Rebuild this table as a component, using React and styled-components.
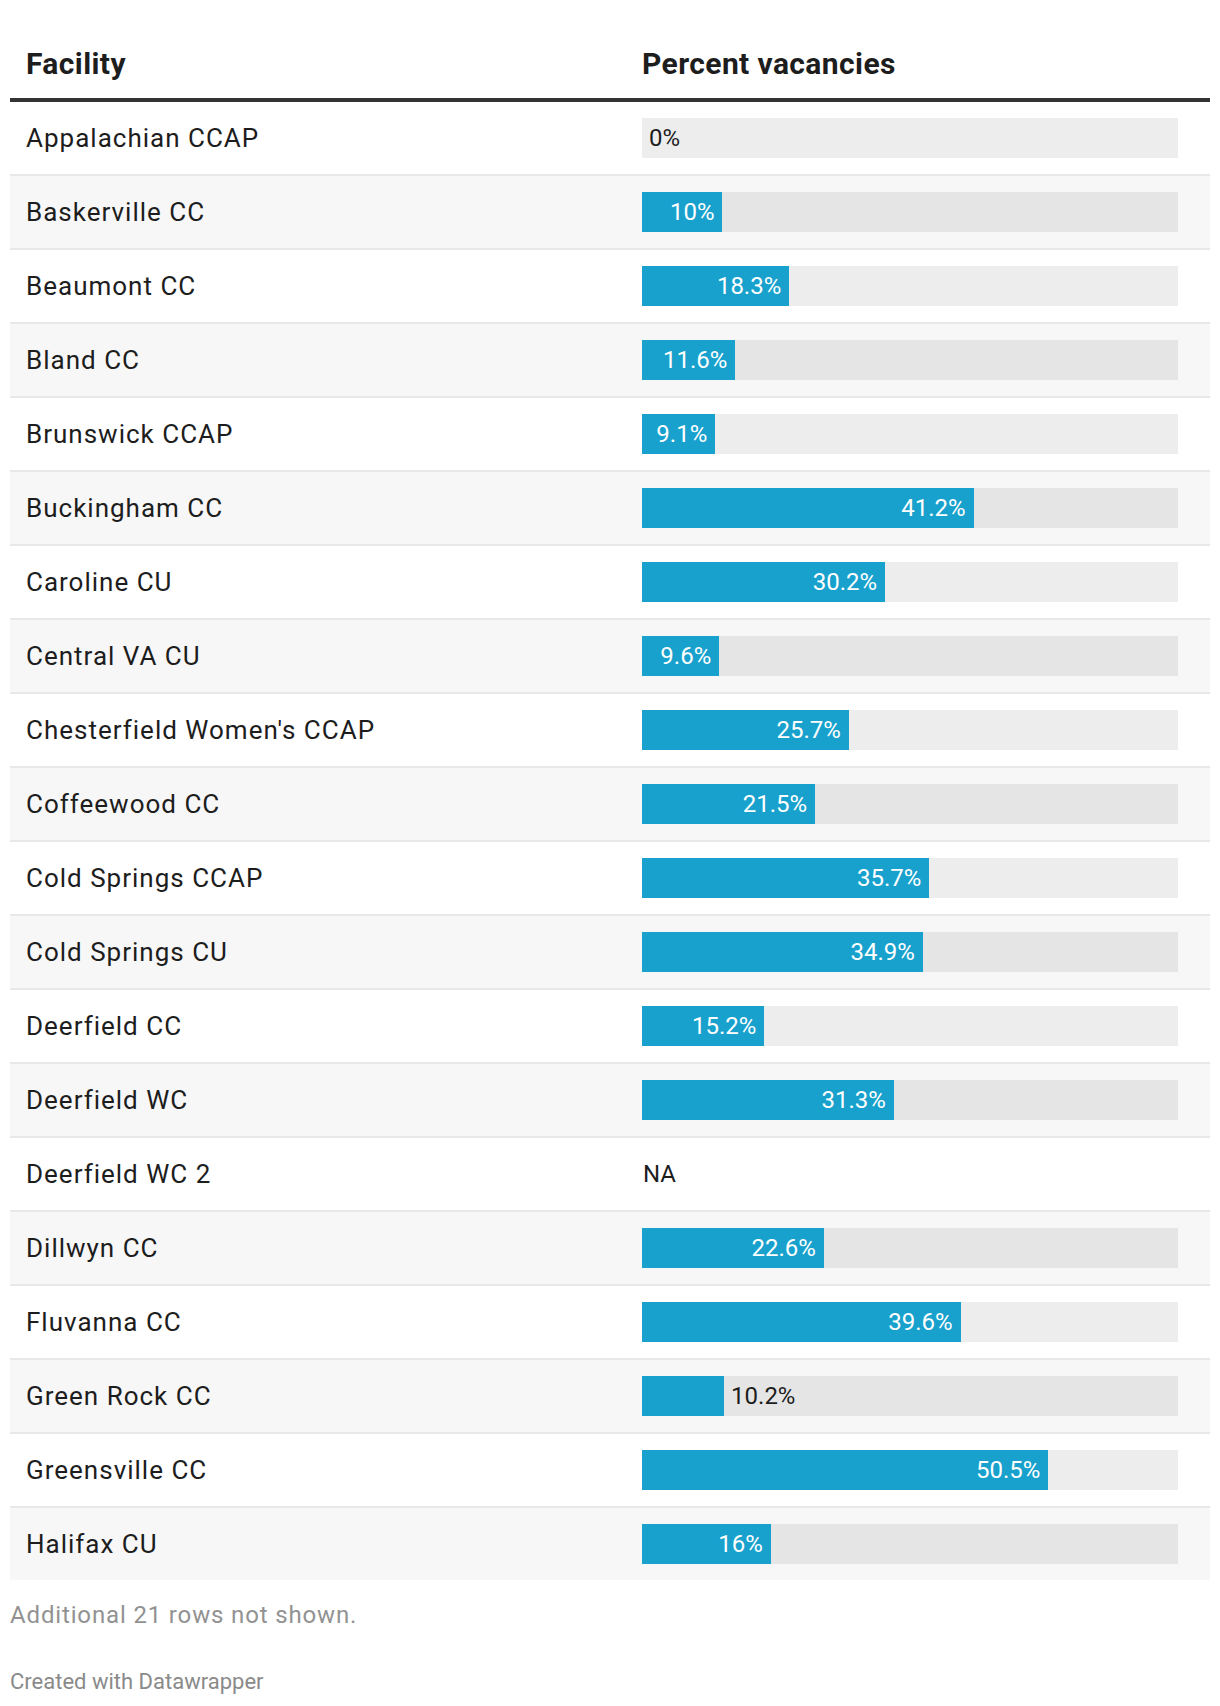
import React from 'react'
import styled, { createGlobalStyle } from 'styled-components'

const MAX = 66.6

const rows = [
  { name: 'Appalachian CCAP', value: 0, outside: true },
  { name: 'Baskerville CC', value: 10 },
  { name: 'Beaumont CC', value: 18.3 },
  { name: 'Bland CC', value: 11.6 },
  { name: 'Brunswick CCAP', value: 9.1 },
  { name: 'Buckingham CC', value: 41.2 },
  { name: 'Caroline CU', value: 30.2 },
  { name: 'Central VA CU', value: 9.6 },
  { name: "Chesterfield Women's CCAP", value: 25.7 },
  { name: 'Coffeewood CC', value: 21.5 },
  { name: 'Cold Springs CCAP', value: 35.7 },
  { name: 'Cold Springs CU', value: 34.9 },
  { name: 'Deerfield CC', value: 15.2 },
  { name: 'Deerfield WC', value: 31.3 },
  { name: 'Deerfield WC 2', value: null },
  { name: 'Dillwyn CC', value: 22.6 },
  { name: 'Fluvanna CC', value: 39.6 },
  { name: 'Green Rock CC', value: 10.2, outside: true },
  { name: 'Greensville CC', value: 50.5 },
  { name: 'Halifax CU', value: 16 },
]

const GlobalStyle = createGlobalStyle`
  body {
    margin: 0;
    background: #fff;
    font-family: Roboto, "Liberation Sans", sans-serif;
    color: #1d1d1d;
  }
`

const Page = styled.div`
  padding: 0 10px;
  width: 1200px;
`

const Table = styled.div`
  display: flex;
  flex-direction: column;
`

const HeaderRow = styled.div`
  display: grid;
  grid-template-columns: 616px 1fr;
  border-bottom: 4px solid #333;
`

const HeaderCell = styled.div`
  padding: 46px 16px 16px;
  font-size: 30px;
  line-height: 36px;
  font-weight: 700;
  letter-spacing: 0.4px;
  color: #1d1d1d;
  padding-right: ${p => (p.$last ? '32px' : '16px')};
`

const Row = styled.div`
  display: grid;
  grid-template-columns: 616px 1fr;
  height: 72px;
  align-items: center;
  background: ${p => (p.$striped ? '#f7f7f7' : '#fff')};
  border-bottom: ${p => (p.$last ? 'none' : '2px solid #e8e8e8')};
`

const NameCell = styled.div`
  padding-left: 16px;
  font-size: 26px;
  line-height: 32px;
  letter-spacing: 1px;
`

const BarCell = styled.div`
  padding: 0 32px 0 16px;
`

const Track = styled.div`
  position: relative;
  height: 40px;
  background: rgba(0, 0, 0, 0.07);
  display: flex;
  align-items: center;
`

const Fill = styled.div`
  height: 100%;
  background: #18a1cd;
  display: flex;
  align-items: center;
  justify-content: flex-end;
  flex-shrink: 0;
`

const Label = styled.span`
  font-size: 24px;
  line-height: 28px;
  padding: 0 8px 0 ${p => (p.$outside ? '7px' : '0')};
  color: ${p => (p.$outside ? '#1d1d1d' : '#fff')};
  white-space: nowrap;
`

const NA = styled.span`
  font-size: 24px;
  line-height: 28px;
  color: #1d1d1d;
  padding-left: 1px;
`

const Notes = styled.div`
  margin-top: 21px;
  font-size: 24px;
  line-height: 28px;
  letter-spacing: 0.85px;
  color: #929292;
`

const Footer = styled.div`
  margin-top: 40px;
  font-size: 22px;
  line-height: 26px;
  color: #8a8a8a;
`

const fmt = v => `${v}%`

const Bar = ({ value, outside }) => {
  if (value === null) return <NA>NA</NA>
  const w = `${(value / MAX) * 100}%`
  return (
    <Track>
      <Fill style={{ width: w }}>
        {!outside && <Label>{fmt(value)}</Label>}
      </Fill>
      {outside && <Label $outside>{fmt(value)}</Label>}
    </Track>
  )
}

export default function App() {
  return (
    <Page>
      <GlobalStyle />
      <Table>
        <HeaderRow>
          <HeaderCell>Facility</HeaderCell>
          <HeaderCell $last>Percent vacancies</HeaderCell>
        </HeaderRow>
        {rows.map((r, i) => (
          <Row key={r.name} $striped={i % 2 === 1} $last={i === rows.length - 1}>
            <NameCell>{r.name}</NameCell>
            <BarCell>
              <Bar value={r.value} outside={r.outside} />
            </BarCell>
          </Row>
        ))}
      </Table>
      <Notes>Additional 21 rows not shown.</Notes>
      <Footer>Created with Datawrapper</Footer>
    </Page>
  )
}
